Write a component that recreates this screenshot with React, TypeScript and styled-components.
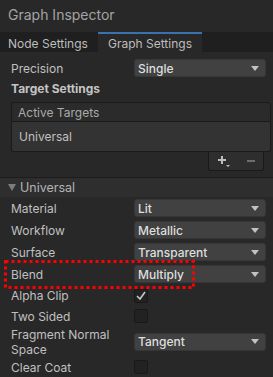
import React from 'react';
import styled, { createGlobalStyle } from 'styled-components';

const GlobalStyle = createGlobalStyle`
  html, body {
    margin: 0;
    padding: 0;
    background: #282828;
  }
  * {
    box-sizing: border-box;
  }
`;

const Panel = styled.div`
  position: relative;
  width: 273px;
  height: 377px;
  overflow: hidden;
  background: #282828;
  font-family: Inter, 'Noto Sans', sans-serif;
  font-size: 12px;
  color: #c4c4c4;
`;

const TitleBar = styled.div`
  height: 32px;
  padding: 6px 0 0 8px;
  font-size: 14px;
  color: #a4a4a4;
`;

const TabBar = styled.div`
  display: flex;
  height: 20px;
  background: #1f1f1f;
`;

const Tab = styled.div<{ $active?: boolean; $width: number; $pad: number }>`
  width: ${(p) => p.$width}px;
  padding-left: ${(p) => p.$pad}px;
  display: flex;
  align-items: center;
  font-size: 12px;
  color: #bdbdbd;
  background: ${(p) => (p.$active ? '#282828' : 'transparent')};
  border-top: 2px solid ${(p) => (p.$active ? '#3a72b0' : 'transparent')};
`;

const Content = styled.div<{ $top?: number }>`
  padding: ${(p) => (p.$top ?? 5)}px 7px 0 11px;
`;

const PropRow = styled.div<{ $h?: number }>`
  display: flex;
  align-items: center;
  height: ${(p) => p.$h || 22}px;
`;

const Label = styled.div`
  width: 123px;
  line-height: 15px;
  color: #c0c0c0;
`;

const Dropdown = styled.div`
  flex: 1;
  height: 18px;
  display: flex;
  align-items: center;
  justify-content: space-between;
  padding: 0 6px 0 3px;
  background: #414141;
  border: 1px solid #363636;
  border-radius: 3px;
  color: #dedede;
  font-weight: 500;
`;

const Checkbox = styled.div`
  width: 14px;
  height: 14px;
  display: flex;
  align-items: center;
  justify-content: center;
  background: #222222;
  border: 1px solid #191919;
  border-radius: 2px;
`;

const SectionTitle = styled.div`
  height: 18px;
  display: flex;
  align-items: center;
  font-weight: 700;
  color: #c4c4c4;
`;

const ListBox = styled.div`
  margin: 5px -5px 0 0;
`;

const ListHeader = styled.div`
  height: 20px;
  display: flex;
  align-items: center;
  padding-left: 6px;
  background: #2b2b2b;
  border: 1px solid #1a1a1a;
  border-radius: 3px 3px 0 0;
  color: #aaaaaa;
`;

const ListBody = styled.div`
  height: 30px;
  display: flex;
  align-items: center;
  padding-left: 7px;
  background: #333333;
  border: 1px solid #1a1a1a;
  border-top: none;
  border-radius: 0 0 3px 3px;
  color: #c0c0c0;
`;

const ListFooter = styled.div`
  width: 56px;
  height: 19px;
  margin: 0 7px 0 auto;
  display: flex;
  align-items: center;
  justify-content: space-around;
  background: #2e2e2e;
  border: 1px solid #1a1a1a;
  border-top: none;
  border-radius: 0 0 3px 3px;
`;

const FoldoutHeader = styled.div`
  margin-top: 6px;
  height: 20px;
  display: flex;
  align-items: center;
  gap: 4px;
  padding-left: 8px;
  background: #2e2e2e;
  border-top: 1px solid #1c1c1c;
  color: #b4b4b4;
  font-size: 12.5px;
`;

const Highlight = styled.svg`
  position: absolute;
  left: 4px;
  top: 260px;
`;

const Arrow = () => (
  <svg width="8" height="5" viewBox="0 0 8 5">
    <path d="M0 0 H8 L4 5 Z" fill="#c2c2c2" />
  </svg>
);

const Select = ({ value }: { value: string }) => (
  <Dropdown>
    <span>{value}</span>
    <Arrow />
  </Dropdown>
);

const Check = ({ checked }: { checked?: boolean }) => (
  <Checkbox>
    {checked && (
      <svg width="10" height="9" viewBox="0 0 10 9">
        <path d="M1 5 L4 8 L9 1" fill="none" stroke="#c8c8c8" strokeWidth="1.6" />
      </svg>
    )}
  </Checkbox>
);

export default function App() {
  return (
    <Panel>
      <GlobalStyle />
      <TitleBar>Graph Inspector</TitleBar>
      <TabBar>
        <Tab $width={98} $pad={8}>Node Settings</Tab>
        <Tab $active $width={104} $pad={10}>Graph Settings</Tab>
      </TabBar>
      <Content>
        <PropRow>
          <Label>Precision</Label>
          <Select value="Single" />
        </PropRow>
        <SectionTitle>Target Settings</SectionTitle>
        <ListBox>
          <ListHeader>Active Targets</ListHeader>
          <ListBody>Universal</ListBody>
          <ListFooter>
            <svg width="14" height="12" viewBox="0 0 14 12">
              <path d="M5 1 V9 M1 5 H9" stroke="#bdbdbd" strokeWidth="2" />
              <path d="M9 10 H13 L11 12 Z" fill="#bdbdbd" />
            </svg>
            <svg width="10" height="4" viewBox="0 0 10 4">
              <path d="M1 2 H9" stroke="#6e6e6e" strokeWidth="2" />
            </svg>
          </ListFooter>
        </ListBox>
      </Content>
      <FoldoutHeader>
        <svg width="8" height="7" viewBox="0 0 8 7">
          <path d="M0 0 H8 L4 7 Z" fill="#7c7c7c" />
        </svg>
        Universal
      </FoldoutHeader>
      <Content $top={0}>
        <PropRow>
          <Label>Material</Label>
          <Select value="Lit" />
        </PropRow>
        <PropRow>
          <Label>Workflow</Label>
          <Select value="Metallic" />
        </PropRow>
        <PropRow>
          <Label>Surface</Label>
          <Select value="Transparent" />
        </PropRow>
        <PropRow>
          <Label>Blend</Label>
          <Select value="Multiply" />
        </PropRow>
        <PropRow $h={21}>
          <Label>Alpha Clip</Label>
          <Check checked />
        </PropRow>
        <PropRow $h={20}>
          <Label>Two Sided</Label>
          <Check />
        </PropRow>
        <PropRow $h={31}>
          <Label>Fragment Normal Space</Label>
          <Select value="Tangent" />
        </PropRow>
        <PropRow $h={20}>
          <Label>Clear Coat</Label>
          <Check />
        </PropRow>
      </Content>
      <Highlight width="191" height="29" viewBox="0 0 191 29">
        <rect
          x="1.5"
          y="1.5"
          width="188"
          height="26"
          fill="none"
          stroke="#ff0000"
          strokeWidth="3"
          strokeDasharray="3 3"
        />
      </Highlight>
    </Panel>
  );
}
